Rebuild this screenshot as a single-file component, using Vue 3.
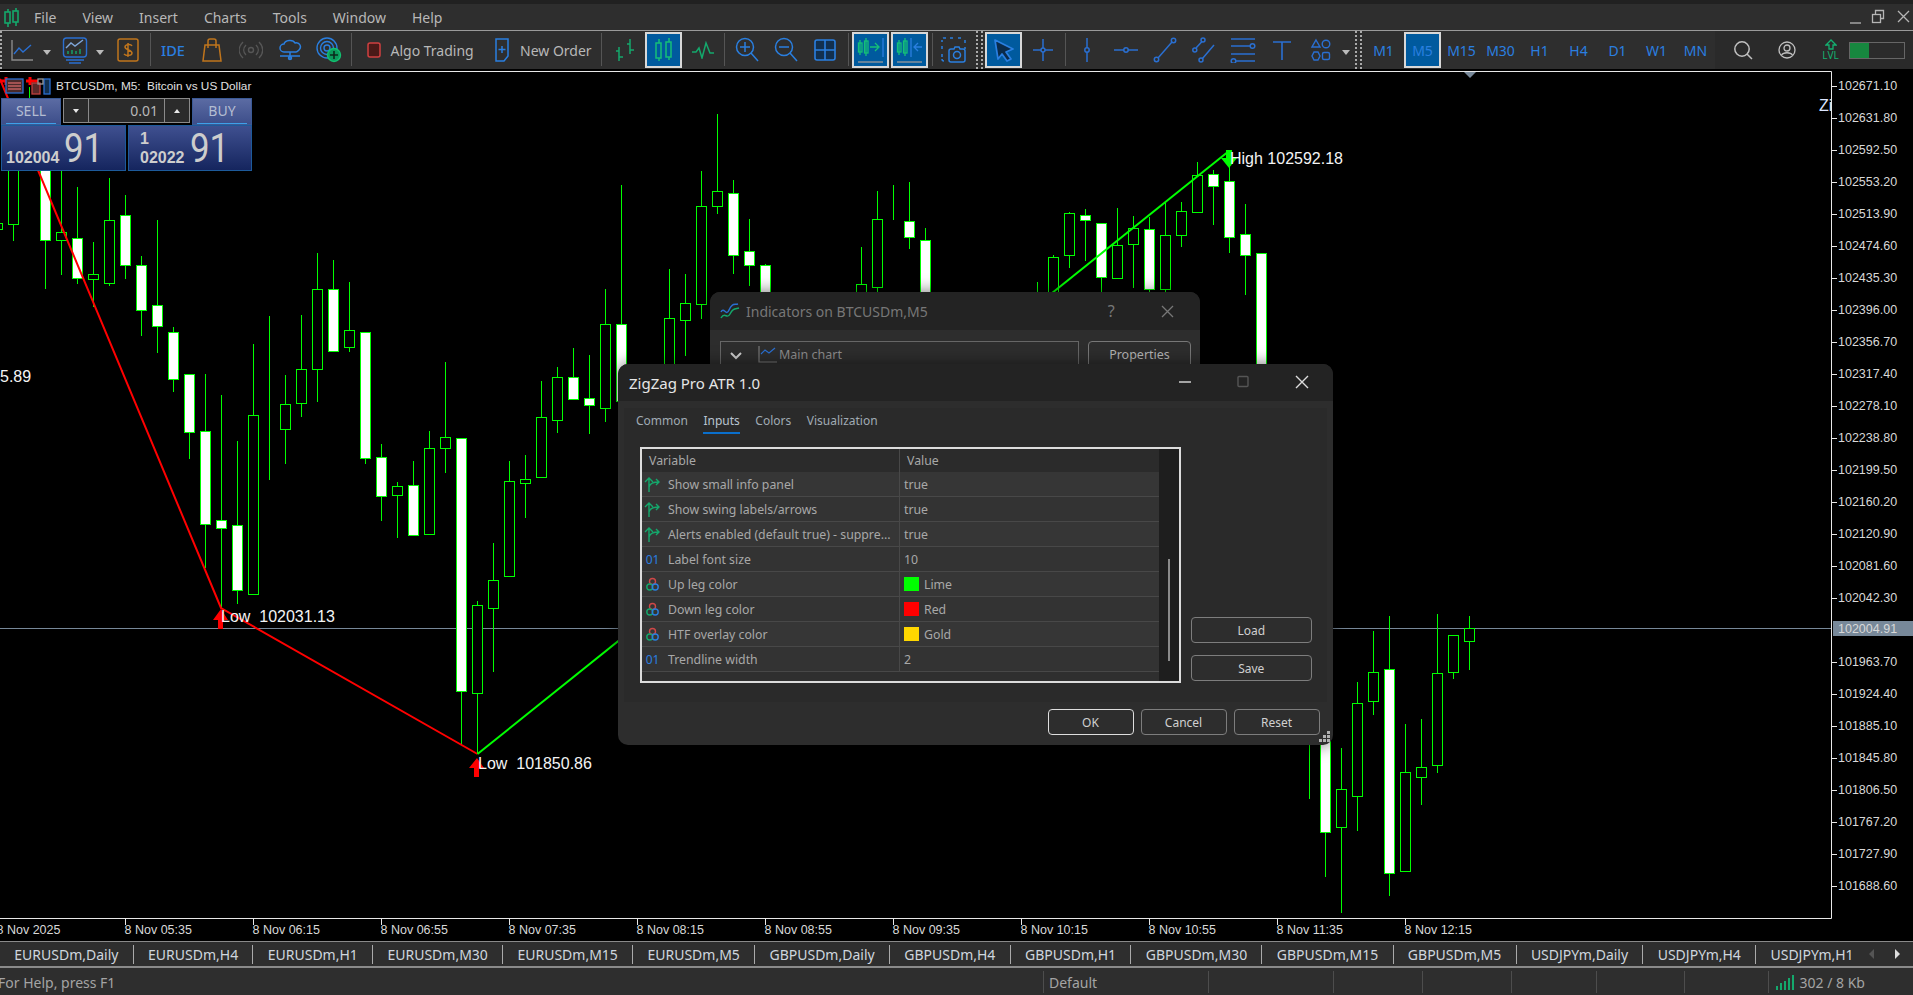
<template>
  <div class="terminal">
    <!-- menu -->
    <div class="menubar">
      <svg class="logo" width="18" height="20" viewBox="0 0 18 20" fill="none" stroke="#14a86c" stroke-width="1.6">
        <path d="M5 1v3M5 15v4M13 0v3M13 14v4" />
        <rect x="2" y="4" width="5" height="11" />
        <rect x="10" y="3" width="5" height="11" />
      </svg>
      <span v-for="m in menus" :key="m" class="menu-item">{{ m }}</span>
      <div class="win-btns">
        <svg width="62" height="18" viewBox="0 0 62 18" fill="none" stroke="#b5b5b5" stroke-width="1.3">
          <path d="M2 15h11" />
          <rect x="24.5" y="6.5" width="8" height="8" />
          <path d="M27.5 6V2.5h8v8H33" />
          <path d="M50 3l11 11M61 3L50 14" />
        </svg>
      </div>
    </div>

    <!-- toolbar -->
    <div class="toolbar">
      <span class="grip g-first"></span>
      <button class="tb">
        <svg width="26" height="26" viewBox="0 0 26 26" fill="none" stroke="#2a6fd1" stroke-width="1.4">
          <path d="M3 3v20h21" stroke="#8a8a8a" />
          <path d="M5 17l5-6 4 4 8-7" />
        </svg>
      </button>
      <span class="drop d1"></span>
      <button class="tb">
        <svg width="26" height="28" viewBox="0 0 26 28" fill="none" stroke="#2a6fd1" stroke-width="1.4">
          <rect x="1.5" y="2" width="23" height="19" rx="3" />
          <path d="M4 12l5-5 4 3 8-6" stroke="#7fa6d8" />
          <path d="M6 18v-3M10 18v-4M14 18v-3M18 18v-5" stroke="#14a86c" />
          <path d="M4 24h18M7 27h12" />
        </svg>
      </button>
      <span class="drop d2"></span>
      <button class="tb">
        <svg width="24" height="26" viewBox="0 0 24 26" fill="none" stroke="#c0751c" stroke-width="1.5">
          <rect x="2" y="2" width="20" height="22" rx="2" />
          <path d="M16 9c-1-2-7-2-7 1s7 3 7 6-6 3-8 1M12 6v14" />
        </svg>
      </button>
      <span class="sep wide"></span>
      <button class="tb ide">IDE</button>
      <button class="tb">
        <svg width="22" height="26" viewBox="0 0 22 26" fill="none" stroke="#c0751c" stroke-width="1.5">
          <path d="M4 8h14l2 16H2z" />
          <path d="M7 11V4a2 2 0 0 1 2-2h4a2 2 0 0 1 2 2v7" />
        </svg>
      </button>
      <button class="tb">
        <svg width="24" height="18" viewBox="0 0 24 18" fill="none" stroke="#565656" stroke-width="1.4">
          <circle cx="12" cy="9" r="2.5" />
          <path d="M7 4c-3 3-3 7 0 10M17 4c3 3 3 7 0 10M4 1C-1 6-1 12 4 17M20 1c5 5 5 11 0 16" />
        </svg>
      </button>
      <button class="tb">
        <svg width="24" height="24" viewBox="0 0 24 24" fill="none" stroke="#2a7fe0" stroke-width="1.5">
          <path d="M6 14a4 4 0 0 1 0-8c1-4 9-5 11-1 5-1 7 4 4 7-1 1-2 2-3 2z" />
          <path d="M2 18h20M12 14v7" />
          <circle cx="12" cy="20" r="1.5" />
        </svg>
      </button>
      <button class="tb">
        <svg width="26" height="26" viewBox="0 0 26 26" fill="none" stroke="#2a7fe0" stroke-width="1.4">
          <circle cx="11" cy="11" r="10" />
          <circle cx="11" cy="11" r="6.5" />
          <circle cx="11" cy="11" r="3" />
          <circle cx="18" cy="18" r="6.5" fill="#0c9a5c" stroke="#12c070" />
          <path d="M18 14v8M14 18h8" stroke="#0b2b1c" stroke-width="1.6" />
        </svg>
      </button>
      <span class="sep wide"></span>
      <button class="tb-text algo">
        <svg width="14" height="16" viewBox="0 0 14 16"><rect x="1" y="1" width="12" height="14" rx="2" fill="#4a1a18" stroke="#d04040" stroke-width="1.5" /></svg>
        Algo Trading
      </button>
      <button class="tb-text order">
        <svg width="16" height="24" viewBox="0 0 16 24" fill="none" stroke="#2a7fe0" stroke-width="1.5">
          <path d="M2 1h12v17l-4 5H2z" />
          <path d="M8 8v7M4.5 11.5h7" />
        </svg>
        New Order
      </button>
      <span class="sep wide"></span>
      <button class="tb">
        <svg width="24" height="24" viewBox="0 0 24 24" fill="none" stroke="#14a86c" stroke-width="1.5">
          <path d="M6 9v14M6 13H3M6 19h4M17 1v15M17 6h-3M17 12h4" />
        </svg>
      </button>
      <button class="tb on">
        <svg width="20" height="26" viewBox="0 0 20 26" fill="none" stroke="#14c078" stroke-width="1.5">
          <path d="M5 2v4M5 21v3M15 1v4M15 20v3" />
          <rect x="2" y="6" width="5" height="15" />
          <rect x="12" y="5" width="5" height="15" />
        </svg>
      </button>
      <button class="tb">
        <svg width="24" height="18" viewBox="0 0 24 18" fill="none" stroke="#14a86c" stroke-width="1.5">
          <path d="M1 11h4l3-4 3 10 4-15 4 10h4" />
        </svg>
      </button>
      <span class="sep thin"></span>
      <button class="tb">
        <svg width="24" height="26" viewBox="0 0 24 26" fill="none" stroke="#2a7fe0" stroke-width="1.5">
          <circle cx="10" cy="10" r="8.5" />
          <path d="M10 5v10M5 10h10M16 16l7 8" />
        </svg>
      </button>
      <button class="tb">
        <svg width="24" height="26" viewBox="0 0 24 26" fill="none" stroke="#2a7fe0" stroke-width="1.5">
          <circle cx="10" cy="10" r="8.5" />
          <path d="M5 10h10M16 16l7 8" />
        </svg>
      </button>
      <button class="tb">
        <svg width="22" height="22" viewBox="0 0 22 22" fill="#12304f" stroke="#2a7fe0" stroke-width="1.6">
          <rect x="1" y="1" width="20" height="20" rx="2" />
          <path d="M11 1v20M1 11h20" />
        </svg>
      </button>
      <span class="sep s9"></span>
      <button class="tb on">
        <svg width="28" height="28" viewBox="0 0 28 28" fill="none" stroke="#14c078" stroke-width="1.3">
          <path d="M3 4v15M9 2v18" />
          <rect x="1.5" y="7" width="3.5" height="9" />
          <rect x="7.5" y="5" width="3.5" height="12" />
          <path d="M13 11h8M18 7l4 4-4 4" />
          <path d="M26 2v19" stroke="#2a7fe0" />
          <path d="M1 26h25" stroke="#9a9a9a" />
        </svg>
      </button>
      <button class="tb on">
        <svg width="28" height="28" viewBox="0 0 28 28" fill="none" stroke="#14c078" stroke-width="1.3">
          <path d="M3 4v15M9 2v18" />
          <rect x="1.5" y="7" width="3.5" height="9" />
          <rect x="7.5" y="5" width="3.5" height="12" />
          <path d="M15 2v19" stroke="#2a7fe0" />
          <path d="M26 11h-8M22 7l-4 4 4 4" stroke="#2a7fe0" />
          <path d="M1 26h25" stroke="#9a9a9a" />
        </svg>
      </button>
      <span class="sep s5"></span>
      <button class="tb">
        <svg width="26" height="26" viewBox="0 0 26 26" fill="none" stroke="#2a7fe0" stroke-width="1.5">
          <path d="M5 1H2.5A1.5 1.5 0 0 0 1 2.5V5M1 9v4M1 17v3M9 1h4M17 1h4M24 3v4M24 10v2M1 22c0 1 1 2 2 2h2" stroke-dasharray="3 2" />
          <path d="M10 12h3l1-2h4l1 2h3a2 2 0 0 1 2 2v9a2 2 0 0 1-2 2H10a2 2 0 0 1-2-2v-9a2 2 0 0 1 2-2z" />
          <circle cx="16" cy="18" r="3.5" />
        </svg>
      </button>
      <span class="grip g-mid"></span>
      <button class="tb on">
        <svg width="24" height="24" viewBox="0 0 24 24" fill="#0b2b4a" stroke="#2a7fe0" stroke-width="1.7" stroke-linejoin="round">
          <path d="M3 2l18 9-7 3 5 7-4 2-5-7-4 5z" />
        </svg>
      </button>
      <button class="tb">
        <svg width="22" height="24" viewBox="0 0 22 24" fill="none" stroke="#2a6fd1" stroke-width="1.5">
          <circle cx="11" cy="12" r="2" />
          <path d="M11 1v9M11 14v9M1 12h8M13 12h8" />
        </svg>
      </button>
      <span class="sep s5"></span>
      <button class="tb">
        <svg width="10" height="26" viewBox="0 0 10 26" fill="none" stroke="#2a6fd1" stroke-width="1.5">
          <circle cx="5" cy="13" r="2.2" />
          <path d="M5 1v10M5 15v10" />
        </svg>
      </button>
      <button class="tb">
        <svg width="24" height="10" viewBox="0 0 24 10" fill="none" stroke="#2a6fd1" stroke-width="1.5">
          <circle cx="12" cy="5" r="2.2" />
          <path d="M0 5h10M14 5h10" />
        </svg>
      </button>
      <button class="tb">
        <svg width="24" height="26" viewBox="0 0 24 26" fill="none" stroke="#2a6fd1" stroke-width="1.5">
          <circle cx="3.5" cy="22.5" r="2.2" />
          <circle cx="20.5" cy="3.5" r="2.2" />
          <path d="M5 21L19 5" />
        </svg>
      </button>
      <button class="tb">
        <svg width="24" height="26" viewBox="0 0 24 26" fill="none" stroke="#2a6fd1" stroke-width="1.5">
          <circle cx="2.8" cy="13" r="2" />
          <circle cx="11" cy="3" r="2" />
          <circle cx="9" cy="23" r="2" />
          <path d="M4 11l6-6.5M10.5 21.5L22 8" />
        </svg>
      </button>
      <button class="tb">
        <svg width="26" height="26" viewBox="0 0 26 26" fill="none" stroke="#2a6fd1" stroke-width="1.5">
          <path d="M1 2h24M1 9h19M1 17h24M6 24h19" />
          <circle cx="22.5" cy="9" r="2.3" />
          <circle cx="3.5" cy="24" r="2.3" />
        </svg>
      </button>
      <button class="tb">
        <svg width="20" height="20" viewBox="0 0 20 20" fill="none" stroke="#2a6fd1" stroke-width="1.6">
          <path d="M1 2h18M10 2v18" />
        </svg>
      </button>
      <button class="tb">
        <svg width="20" height="24" viewBox="0 0 20 24" fill="none" stroke="#2a6fd1" stroke-width="1.4">
          <path d="M5 2l4 7H1z" />
          <circle cx="15" cy="6" r="3.8" />
          <path d="M3 14h4l2 4-2 4H3l-2-4z" />
          <rect x="11.5" y="14.5" width="7" height="7" rx="1.5" />
        </svg>
      </button>
      <span class="drop d3"></span>
      <span class="grip g-tf"></span>
      <button v-for="t in timeframes" :key="t" class="tb tf" :class="{ on: t === 'M5' }">{{ t }}</button>
      <div class="tb-right">
        <svg class="r-search" width="20" height="20" viewBox="0 0 20 20" fill="none" stroke="#c0c0c0" stroke-width="1.5">
          <circle cx="9" cy="9" r="7.2" />
          <path d="M14 14l5 5" />
        </svg>
        <svg class="r-user" width="18" height="18" viewBox="0 0 18 18" fill="none" stroke="#c0c0c0" stroke-width="1.3">
          <circle cx="9" cy="9" r="8" />
          <circle cx="9" cy="7" r="3" />
          <path d="M3.5 14c2-3 9-3 11 0" />
        </svg>
        <div class="lvl">
          <svg width="12" height="11" viewBox="0 0 12 11" fill="none" stroke="#14b070" stroke-width="1.3"><path d="M6 1L1 6h3v4h4V6h3z" /></svg>
          <span>LVL</span>
        </div>
        <div class="meter"><span class="meter-fill"></span></div>
      </div>
    </div>

    <!-- chart -->
    <div class="chart-wrap">
      <svg class="chart" width="1913" height="871" viewBox="0 70 1913 871">
        <defs>
          <clipPath id="plot"><rect x="0" y="70" width="1831" height="847" /></clipPath>
        </defs>
        <g clip-path="url(#plot)">
          <path d="M0 627.5H1831" stroke="#778899" stroke-width="1" />
          <g v-for="c in candles" :key="c.i" stroke="#00ff00" shape-rendering="crispEdges">
            <path :d="wickPath(c)" stroke-width="1" fill="none" />
            <rect :x="c.x - 5" :y="c.top + 0.5" width="10" :height="c.bottom - c.top" :fill="c.filled ? '#fff' : '#000'" stroke-width="1" />
          </g>
          <path d="M0 78L7 95L221 607L477.5 753" stroke="#ff0000" stroke-width="2" fill="none" />
          <path d="M0 80h14M26 80h12M30 76v8M6 76v8" stroke="#ff0000" stroke-width="3" fill="none" />
          <path d="M477.5 753L1229 150" stroke="#00ff00" stroke-width="2" fill="none" />
          <!-- swing arrows -->
          <path d="M221 608l-8 11h5v9h5v-9h5z" fill="#ff0000" />
          <path d="M477 757l-8 10h5v9h5v-9h5z" fill="#ff0000" />
          <path d="M1229 167l-8-10h5v-8h6v8h5z" fill="#00ff00" />
          <text class="lbl" x="221" y="621">Low&nbsp; 102031.13</text>
          <text class="lbl" x="478" y="768">Low&nbsp; 101850.86</text>
          <text class="lbl" x="1230" y="163">High 102592.18</text>
          <text class="lbl" x="0" y="381">5.89</text>
          <text class="lbl zi" x="1819" y="110">ZigZag Pro</text>
          <path d="M1463 70h14l-7 7z" fill="#778899" />
        </g>
        <path d="M0 70.5H1831.5V917.5H0" stroke="#e8e8e8" fill="none" />
        <!-- price axis -->
        <g v-for="p in prices" :key="p.label">
          <path :d="`M1832 ${p.y}h5`" stroke="#e8e8e8" />
          <text class="axis" x="1838" :y="p.y + 3.5">{{ p.label }}</text>
        </g>
        <rect x="1833" y="620" width="80" height="15" fill="#778899" />
        <text class="axis" x="1838" y="632" fill="#fff">102004.91</text>
        <!-- time axis -->
        <g v-for="t in times" :key="t.label">
          <path :d="`M${t.x} 918v6`" stroke="#e8e8e8" />
          <text class="axis" :x="t.x - 1" y="932.5">{{ t.label }}</text>
        </g>
      </svg>

      <div class="symbol">
        <svg width="50" height="18" viewBox="0 0 50 18" fill="none" stroke-width="1.3">
          <rect x="4" y="2" width="17" height="14" fill="#4a2a2a" stroke="#2a6fd1" />
          <path d="M6 6h13M6 9h13M6 12h13" stroke="#c06060" />
          <rect x="30" y="6" width="8" height="11" fill="#5a2a2a" stroke="#c04040" />
          <rect x="42" y="2" width="6" height="15" fill="#12304f" stroke="#2a6fd1" />
          <rect x="36" y="2" width="5" height="5" stroke="#999" />
        </svg>
        <span>BTCUSDm, M5:&nbsp; Bitcoin vs US Dollar</span>
      </div>

      <div class="trade">
        <div class="trade-top">
          <div class="side-btn">SELL</div>
          <div class="volume">
            <span class="vol-step"><i class="tri down"></i></span>
            <span class="vol-val">0.01</span>
            <span class="vol-step"><i class="tri up"></i></span>
          </div>
          <div class="side-btn">BUY</div>
        </div>
        <div class="trade-prices">
          <div class="quote">
            <span class="q-small"><span>102004</span></span>
            <span class="q-big">91</span>
          </div>
          <div class="quote ask">
            <span class="q-small"><span>1</span><span>02022</span></span>
            <span class="q-big">91</span>
          </div>
        </div>
      </div>
    </div>

    <!-- symbol tabs -->
    <div class="tabs">
      <span v-for="t in chartTabs" :key="t" class="chart-tab">{{ t }}</span>
      <div class="tab-arrows">
        <svg width="34" height="12" viewBox="0 0 34 12">
          <path d="M6 1v10L1 6z" fill="#555" />
          <path d="M27 1v10l5-5z" fill="#ddd" />
        </svg>
      </div>
    </div>

    <!-- status -->
    <div class="status">
      <span class="st st-help">For Help, press F1</span>
      <span class="st st-default">Default</span>
      <span class="st st-a"></span>
      <span class="st st-b"></span>
      <span class="st st-c"></span>
      <span class="st st-d"></span>
      <span class="st st-e"></span>
      <span class="st st-f"></span>
      <span class="st st-last">
        <svg width="18" height="15" viewBox="0 0 18 15" fill="#14a86c">
          <rect x="0" y="11" width="2" height="4" />
          <rect x="4" y="8" width="2" height="7" />
          <rect x="8" y="6" width="2" height="9" />
          <rect x="12" y="3" width="2" height="12" />
          <rect x="16" y="0" width="2" height="15" />
        </svg>
        302 / 8 Kb
      </span>
    </div>

    <!-- indicators window, behind -->
    <div class="dlg dlg-back">
      <div class="dlg-title back-title">
        <svg width="20" height="16" viewBox="0 0 20 16" fill="none" stroke-width="1.5">
          <path d="M1 9c3-6 5 5 8-2s5-5 9-6" stroke="#2a6fd1" />
          <path d="M1 15c4-7 6 2 9-4s5-5 9-6" stroke="#14a86c" />
        </svg>
        <span class="back-name">Indicators on BTCUSDm,M5</span>
        <span class="back-q">?</span>
        <svg width="13" height="13" viewBox="0 0 13 13" stroke="#777" stroke-width="1.3"><path d="M1 1l11 11M12 1L1 12" /></svg>
      </div>
      <div class="back-body">
        <div class="tree">
          <svg width="12" height="8" viewBox="0 0 12 8" fill="none" stroke="#ccc" stroke-width="2"><path d="M1 1l5 5 5-5" /></svg>
          <svg class="tree-icon" width="19" height="18" viewBox="0 0 19 18" fill="none" stroke-width="1.2">
            <path d="M1 1v16h18" stroke="#777" />
            <path d="M3 9l4-4 4 3 6-5" stroke="#2a6fd1" />
          </svg>
          <span>Main chart</span>
        </div>
        <div class="props">Properties</div>
      </div>
    </div>

    <!-- indicator properties -->
    <div class="dlg dlg-front">
      <div class="dlg-title">
        <span class="front-name">ZigZag Pro ATR 1.0</span>
        <svg class="title-btns" width="130" height="14" viewBox="0 0 130 14" fill="none" stroke-width="1.4">
          <path d="M0 7h12" stroke="#ddd" />
          <rect x="59" y="1.5" width="10" height="10" rx="1" stroke="#555" />
          <path d="M117 1l12 12M129 1l-12 12" stroke="#ddd" />
        </svg>
      </div>
      <div class="panel">
        <div class="dlg-tabs">
          <span v-for="t in dialogTabs" :key="t" class="dlg-tab" :class="{ active: t === 'Inputs' }">{{ t }}</span>
        </div>
        <div class="panel-main">
          <div class="inputs">
            <div class="inputs-rows">
              <div class="row head">
                <span class="cell">Variable</span>
                <span class="cell val">Value</span>
              </div>
              <div v-for="r in rows" :key="r.name" class="row">
                <span class="cell">
                  <svg v-if="r.type === 'bool'" class="ic" width="17" height="15" viewBox="0 0 17 15" fill="none" stroke="#14a86c" stroke-width="1.4">
                    <path d="M5 15V2M1 5l4-4 4 4M5 10c1-4 4-5 10-5M12 2l3 3-3 3" />
                  </svg>
                  <span v-else-if="r.type === 'int'" class="ic ic-int">01</span>
                  <svg v-else class="ic" width="17" height="15" viewBox="0 0 17 15" fill="none" stroke-width="1.4">
                    <circle cx="8.5" cy="4.5" r="3" stroke="#d04848" />
                    <circle cx="5.8" cy="10" r="3" stroke="#14a86c" />
                    <circle cx="11.2" cy="10" r="3" stroke="#2a7fe0" />
                  </svg>
                  <span>{{ r.name }}</span>
                </span>
                <span class="cell val">
                  <i v-if="r.color" class="swatch" :style="{ background: r.color }"></i>
                  {{ r.value }}
                </span>
              </div>
              <div class="row-rest"></div>
            </div>
            <div class="scroll"><span class="thumb"></span></div>
          </div>
          <div class="side">
            <button class="btn">Load</button>
            <button class="btn">Save</button>
          </div>
        </div>
      </div>
      <div class="footer">
        <button class="btn foot primary">OK</button>
        <button class="btn foot">Cancel</button>
        <button class="btn foot">Reset</button>
      </div>
      <svg class="resize" width="12" height="12" viewBox="0 0 12 12" fill="#b0b0b0">
        <rect x="8" y="0" width="3" height="3" />
        <rect x="4" y="4" width="3" height="3" />
        <rect x="8" y="4" width="3" height="3" />
        <rect x="0" y="8" width="3" height="3" />
        <rect x="4" y="8" width="3" height="3" />
        <rect x="8" y="8" width="3" height="3" />
      </svg>
    </div>
  </div>
</template>

<script setup>
const menus = ['File', 'View', 'Insert', 'Charts', 'Tools', 'Window', 'Help']
const timeframes = ['M1', 'M5', 'M15', 'M30', 'H1', 'H4', 'D1', 'W1', 'MN']
const dialogTabs = ['Common', 'Inputs', 'Colors', 'Visualization']
const chartTabs = [
  'EURUSDm,Daily', 'EURUSDm,H4', 'EURUSDm,H1', 'EURUSDm,M30', 'EURUSDm,M15', 'EURUSDm,M5',
  'GBPUSDm,Daily', 'GBPUSDm,H4', 'GBPUSDm,H1', 'GBPUSDm,M30', 'GBPUSDm,M15', 'GBPUSDm,M5',
  'USDJPYm,Daily', 'USDJPYm,H4', 'USDJPYm,H1',
]

const rows = [
  { type: 'bool', name: 'Show small info panel', value: 'true' },
  { type: 'bool', name: 'Show swing labels/arrows', value: 'true' },
  { type: 'bool', name: 'Alerts enabled (default true) - suppre...', value: 'true' },
  { type: 'int', name: 'Label font size', value: '10' },
  { type: 'color', name: 'Up leg color', value: 'Lime', color: '#00ff00' },
  { type: 'color', name: 'Down leg color', value: 'Red', color: '#ff0000' },
  { type: 'color', name: 'HTF overlay color', value: 'Gold', color: '#ffd700' },
  { type: 'int', name: 'Trendline width', value: '2' },
]

// index, high, body top, body bottom, low, filled
const raw = [
  [-1, 215, 222, 228, 235, 0], [0, 150, 150, 223, 240, 0], [1, 86, 100, 120, 130, 0], [2, 150, 150, 239, 288, 1],
  [3, 150, 231, 239, 274, 0], [4, 186, 237, 277, 283, 1], [5, 241, 273, 278, 306, 0], [6, 177, 219, 282, 285, 0],
  [7, 194, 214, 264, 278, 1], [8, 255, 264, 309, 335, 1], [9, 219, 304, 325, 352, 1], [10, 326, 331, 378, 391, 1],
  [11, 373, 373, 431, 458, 1], [12, 373, 430, 523, 567, 1], [13, 394, 519, 527, 607, 1], [14, 440, 524, 589, 603, 1],
  [15, 343, 414, 593, 593, 0], [16, 315, 421, 421, 479, 0], [17, 374, 403, 428, 463, 0], [18, 314, 368, 402, 416, 0],
  [19, 252, 288, 368, 401, 0], [20, 259, 288, 350, 350, 1], [21, 281, 329, 346, 351, 0], [22, 331, 331, 457, 463, 1],
  [23, 443, 456, 495, 520, 1], [24, 481, 485, 494, 537, 0], [25, 460, 484, 534, 534, 1], [26, 430, 447, 533, 533, 0],
  [27, 361, 436, 447, 472, 0], [28, 437, 437, 690, 743, 1], [29, 600, 604, 692, 753, 0], [30, 542, 579, 607, 671, 0],
  [31, 460, 480, 575, 575, 0], [32, 454, 478, 482, 517, 0], [33, 380, 416, 476, 476, 0], [34, 366, 376, 419, 432, 0],
  [35, 347, 376, 398, 398, 1], [36, 354, 397, 404, 433, 1], [37, 288, 323, 407, 421, 0], [38, 184, 323, 400, 420, 1],
  [41, 268, 317, 400, 420, 0], [42, 273, 302, 319, 355, 0], [43, 170, 205, 303, 318, 0], [44, 113, 190, 205, 213, 0],
  [45, 179, 192, 254, 273, 1], [46, 218, 250, 264, 285, 1], [47, 263, 264, 293, 300, 1], [52, 292, 300, 320, 340, 0],
  [53, 246, 283, 320, 340, 0], [54, 190, 218, 286, 293, 0], [55, 184, 219, 219, 219, 0], [56, 181, 220, 236, 248, 1],
  [57, 227, 239, 320, 340, 1], [64, 281, 300, 320, 330, 0], [65, 254, 256, 320, 330, 0], [66, 211, 212, 254, 267, 0],
  [67, 208, 214, 219, 260, 1], [68, 222, 222, 276, 300, 1], [69, 207, 244, 277, 277, 0], [70, 215, 227, 243, 287, 0],
  [71, 216, 228, 288, 300, 1], [72, 202, 234, 288, 300, 0], [73, 201, 210, 234, 246, 0], [74, 161, 174, 211, 211, 0],
  [75, 169, 173, 185, 224, 1], [76, 150, 180, 236, 252, 1], [77, 203, 233, 254, 294, 1], [78, 252, 252, 400, 420, 1],
  [81, 700, 710, 730, 798, 0], [82, 700, 720, 831, 876, 1], [83, 747, 788, 826, 912, 0], [84, 681, 702, 795, 830, 0],
  [85, 630, 671, 700, 714, 0], [86, 615, 668, 872, 895, 1], [87, 723, 771, 870, 870, 0], [88, 718, 766, 776, 804, 0],
  [89, 613, 672, 764, 772, 0], [90, 634, 634, 671, 678, 0], [91, 615, 627, 640, 669, 0],
]
const candles = raw.map(([i, high, top, bottom, low, filled]) => ({
  i, x: 13.5 + 16 * i, high, top, bottom, low, filled: !!filled,
}))

function wickPath(c) {
  return `M${c.x} ${c.high}V${c.low}`
}

const priceLabels = [
  '102671.10', '102631.80', '102592.50', '102553.20', '102513.90', '102474.60', '102435.30', '102396.00',
  '102356.70', '102317.40', '102278.10', '102238.80', '102199.50', '102160.20', '102120.90', '102081.60',
  '102042.30', null, '101963.70', '101924.40', '101885.10', '101845.80', '101806.50', '101767.20',
  '101727.90', '101688.60',
]
const prices = priceLabels
  .map((label, i) => ({ label, y: 85.5 + 32 * i }))
  .filter(p => p.label)

const timeLabels = [
  '8 Nov 2025', '8 Nov 05:35', '8 Nov 06:15', '8 Nov 06:55', '8 Nov 07:35', '8 Nov 08:15', '8 Nov 08:55',
  '8 Nov 09:35', '8 Nov 10:15', '8 Nov 10:55', '8 Nov 11:35', '8 Nov 12:15',
]
const times = timeLabels.map((label, i) => ({ label, x: -2.5 + 128 * i }))
</script>

<style>
body {
  background: #000;
  overflow: hidden;
}
</style>

<style scoped>
.terminal {
  position: relative;
  width: 1913px;
  height: 995px;
  overflow: hidden;
  display: flex;
  flex-direction: column;
  background: #000;
  font-family: "Noto Sans", "Liberation Sans", sans-serif;
  color: #b8b8b8;
}

button {
  font-family: inherit;
  padding: 0;
  background: none;
  border: none;
  color: inherit;
}

/* menu */
.menubar {
  height: 26px;
  margin-top: 4px;
  padding-left: 34px;
  display: flex;
  align-items: center;
  gap: 26px;
  position: relative;
  background: #2e2e2e;
  border-bottom: 1px solid #9a9a9a;
  font-size: 14px;
  box-shadow: 0 -4px 0 #212121;
}

.logo {
  position: absolute;
  left: 3px;
  top: 4px;
}

.win-btns {
  position: absolute;
  right: 3px;
  top: 4px;
  display: flex;
}

/* toolbar */
.toolbar {
  height: 38px;
  display: flex;
  align-items: stretch;
  background: #2e2e2e;
  flex-shrink: 0;
}

.tb {
  width: 39px;
  display: flex;
  align-items: center;
  justify-content: center;
  flex-shrink: 0;
}

.tb.on {
  background: #005a9e;
  outline: 1px solid #d8d8d8;
  outline-offset: -2px;
  box-shadow: inset 0 0 0 1px #d8d8d8;
  margin: 1px 1px 1px 1px;
  width: 37px;
}

.ide {
  color: #2a7fe0;
  font-size: 14.5px;
  font-weight: 500;
}

.tf {
  color: #2a7fe0;
  font-size: 14px;
}

.tb-text {
  display: flex;
  align-items: center;
  font-size: 14px;
  color: #b8b8b8;
  gap: 10px;
  flex-shrink: 0;
}

.algo {
  width: 129.5px;
  padding-left: 12px;
}

.order {
  width: 115px;
  padding-left: 10px;
}

.sep {
  flex-shrink: 0;
  position: relative;
}

.sep::after {
  content: "";
  position: absolute;
  top: 2px;
  bottom: 3px;
  right: 0;
  width: 1px;
  background: #555;
}

.sep.wide {
  width: 6px;
}

.sep.wide::after {
  right: 3px;
}

.sep.thin {
  width: 5px;
}

.sep.thin::after {
  right: 2px;
}

.sep.s9 {
  width: 7px;
}

.sep.s9::after {
  right: 2px;
}

.sep.s5 {
  width: 5.5px;
}

.sep.s5::after {
  right: 2px;
}

.drop {
  flex-shrink: 0;
  position: relative;
}

.drop::after {
  content: "";
  position: absolute;
  top: 19px;
  left: 1px;
  border-left: 4px solid transparent;
  border-right: 4px solid transparent;
  border-top: 5px solid #bbb;
}

.d1,
.d2,
.d3 {
  width: 10px;
}

.d1 + .tb,
.d2 + .tb {
  margin-left: 4px;
}

.grip {
  flex-shrink: 0;
  position: relative;
  border-left: 2px dotted #aaa;
}

.g-first {
  width: 0;
  margin-right: 0.5px;
}

.g-mid {
  width: 8.5px;
  margin-left: 2px;
  margin-right: -2px;
}

.g-mid::after,
.g-tf::after {
  content: "";
  position: absolute;
  left: 3px;
  top: 0;
  bottom: 0;
  border-left: 2px dotted #aaa;
}

.g-tf {
  width: 11.5px;
  margin-left: 4px;
  margin-right: -4px;
}

.tb-right {
  width: 198px;
  display: flex;
  align-items: center;
  background: #2a2a2a;
  position: relative;
  flex-shrink: 0;
}

.r-search {
  margin-left: 18px;
}

.r-user {
  margin-left: 25px;
}

.lvl {
  margin-left: 26px;
  width: 17px;
  display: flex;
  flex-direction: column;
  align-items: center;
  color: #14b070;
  font-size: 10px;
  line-height: 11px;
}

.meter {
  margin-left: 9.5px;
  width: 56px;
  height: 17px;
  background: #2b2b2b;
  border: 1px solid #666;
  box-sizing: border-box;
}

.meter-fill {
  display: block;
  width: 19px;
  height: 100%;
  background: #17873f;
}

/* chart */
.chart-wrap {
  position: relative;
  margin-top: 2px;
  height: 871px;
  flex-shrink: 0;
  background: #000;
}

.chart {
  display: block;
}

.lbl {
  font-family: "Liberation Sans", sans-serif;
  font-size: 16px;
  fill: #f4f4f4;
}

.zi {
  fill: #dde6ff;
}

.axis {
  font-family: "Liberation Sans", sans-serif;
  font-size: 12.5px;
  fill: #d8d8d8;
}

.symbol {
  position: absolute;
  top: 6px;
  left: 2px;
  display: flex;
  align-items: center;
  gap: 4px;
  font-family: "Liberation Sans", sans-serif;
  font-size: 11.8px;
  color: #e0e0e0;
  height: 18px;
}

.trade {
  position: absolute;
  top: 27px;
  left: 1px;
  width: 251px;
}

.trade-top {
  display: flex;
  gap: 2px;
  height: 27px;
}

.side-btn {
  width: 60px;
  box-sizing: border-box;
  background: linear-gradient(#5b6ba3, #3d4e8a);
  border: 1px solid #3a5a96;
  color: #b4bdd2;
  font-size: 14px;
  text-align: center;
  line-height: 24px;
  position: relative;
}

.side-btn::after {
  content: "";
  position: absolute;
  left: 4px;
  right: 4px;
  bottom: 0;
  height: 1px;
  background: #3fa0e8;
}

.volume {
  width: 127px;
  height: 25px;
  display: flex;
  box-sizing: border-box;
  background: #2b2b2b;
  border: 1px solid #8a8a8a;
  color: #b8b8b8;
  font-size: 14px;
}

.vol-step {
  width: 24px;
  display: flex;
  align-items: center;
  justify-content: center;
}

.vol-val {
  flex: 1;
  text-align: right;
  padding-right: 6px;
  line-height: 23px;
  border-left: 1px solid #8a8a8a;
  border-right: 1px solid #8a8a8a;
}

.tri {
  border-left: 3.5px solid transparent;
  border-right: 3.5px solid transparent;
}

.tri.down {
  border-top: 4px solid #e8e8e8;
}

.tri.up {
  border-bottom: 4px solid #e8e8e8;
}

.trade-prices {
  display: flex;
  gap: 2px;
}

.quote {
  width: 125px;
  height: 46px;
  box-sizing: border-box;
  display: flex;
  align-items: flex-end;
  padding: 0 0 2px 4px;
  background: linear-gradient(#3f5090, #15255e);
  border: 1px solid #1d5a9a;
  color: #cdcdcd;
}

.quote.ask {
  width: 124px;
  padding-left: 11px;
}

.q-small {
  display: flex;
  flex-direction: column;
  font-family: "Liberation Sans", sans-serif;
  font-size: 16px;
  font-weight: 700;
  line-height: 19px;
  margin-right: 5px;
  padding-bottom: 1px;
}

.q-big {
  display: inline-block;
  font-family: Roboto, "Liberation Sans", sans-serif;
  font-weight: 400;
  font-size: 41px;
  line-height: 40px;
  transform: scaleX(0.85);
  transform-origin: left center;
}

/* tabs + status */
.tabs {
  height: 27px;
  margin-top: -1px;
  display: flex;
  align-items: center;
  background: #2e2e2e;
  border-top: 1px solid #8a8a8a;
  border-bottom: 2px solid #8a8a8a;
  box-sizing: border-box;
  flex-shrink: 0;
  position: relative;
  color: #cfd6de;
  font-size: 14px;
}

.chart-tab {
  padding: 0 14.3px;
  height: 19px;
  line-height: 19px;
  border-right: 1px solid #aaa;
  white-space: nowrap;
}

.chart-tab:nth-child(15) {
  border-right: 0;
}

.tab-arrows {
  position: absolute;
  right: 11px;
  top: 6px;
  display: flex;
  background: #2e2e2e;
}

.status {
  flex: 1;
  display: flex;
  background: #2e2e2e;
  font-size: 14px;
  align-items: stretch;
  color: #a4a4a4;
}

.st {
  height: 22px;
  margin-top: 3px;
  line-height: 23px;
  box-sizing: border-box;
  border-right: 1px solid #4d4d4d;
  flex-shrink: 0;
  white-space: nowrap;
}

.st-help {
  width: 1045px;
  margin-left: -1px;
  text-indent: -1px;
}

.st-default {
  width: 165px;
  padding-left: 5px;
}

.st-a {
  width: 125px;
}

.st-b,
.st-c {
  width: 89px;
}

.st-d {
  width: 85px;
}

.st-e {
  width: 87.5px;
}

.st-f {
  width: 84px;
}

.st-last {
  width: 145px;
  border-right: 0;
  display: flex;
  align-items: center;
  gap: 6px;
  padding-left: 7px;
}

/* dialogs */
.dlg {
  position: absolute;
  border-radius: 10px;
  background: #2d2d2d;
  box-shadow: 0 0 16px rgba(0, 0, 0, 0.55);
  box-sizing: border-box;
}

.dlg-back {
  left: 710px;
  top: 292px;
  width: 490px;
  height: 200px;
}

.dlg-front {
  left: 618px;
  top: 364px;
  width: 715px;
  height: 381px;
  display: flex;
  flex-direction: column;
}

.dlg-title {
  height: 37px;
  flex-shrink: 0;
  display: flex;
  align-items: center;
  background: #232323;
  border-radius: 10px 10px 0 0;
  padding-left: 11px;
  position: relative;
}

.back-title {
  height: 38px;
  color: #777;
  font-size: 14px;
  padding-left: 10px;
}

.back-name {
  margin-left: 6px;
}

.back-q {
  margin-left: 180px;
  font-size: 16px;
  margin-right: 46px;
}

.back-body {
  display: flex;
  padding: 11px 9px 0 10px;
  gap: 9px;
}

.tree {
  width: 359px;
  height: 40px;
  box-sizing: border-box;
  border: 1px solid #666;
  display: flex;
  align-items: flex-start;
  padding-left: 9px;
  font-size: 12.5px;
  color: #8c8c8c;
  line-height: 26px;
}

.tree > svg:first-child {
  margin-top: 10px;
}

.tree-icon {
  margin: 3px 2px 0 16px;
}

.props {
  width: 103px;
  height: 40px;
  box-sizing: border-box;
  border: 1px solid #777;
  border-radius: 4px;
  text-align: center;
  font-size: 12.5px;
  line-height: 26px;
  color: #b4b4b4;
}

.front-name {
  color: #e6e6e6;
  font-size: 15px;
}

.title-btns {
  position: absolute;
  left: 561px;
  top: 11px;
}

.panel {
  margin: 7px 6px 0;
  height: 294px;
  box-sizing: border-box;
  padding: 0 10px 0 16px;
  background: #2a2a2a;
}

.dlg-tabs {
  height: 26px;
  display: flex;
  gap: 15.5px;
  font-size: 12px;
  color: #a0aab4;
  margin-left: -4px;
  margin-bottom: 13px;
}

.dlg-tab {
  line-height: 25px;
  height: 26px;
  box-sizing: border-box;
}

.dlg-tab.active {
  color: #b8c4d0;
  border-bottom: 2px solid #0a6fcc;
}

.panel-main {
  display: flex;
  gap: 10px;
  align-items: stretch;
}

.inputs {
  width: 541px;
  height: 236px;
  box-sizing: border-box;
  border: 2px solid #dcdcdc;
  display: flex;
  background: #1e1e1e;
}

.inputs-rows {
  width: 516.5px;
  display: flex;
  flex-direction: column;
}

.row {
  display: grid;
  grid-template-columns: 258px 1fr;
  height: 25px;
  box-sizing: border-box;
  border-bottom: 1px solid #484848;
  background: #363636;
  font-size: 12.3px;
  color: #a8a8a8;
}

.row:nth-child(odd) {
  background: #333;
}

.row.head {
  height: 22.5px;
  background: #2b2b2b;
  border-bottom: 0;
}

.cell {
  display: flex;
  align-items: center;
  min-width: 0;
  white-space: nowrap;
  padding: 1px 0 0 2px;
  border-right: 1px solid #484848;
  box-sizing: border-box;
}

.head .cell {
  padding-left: 7px;
}

.cell.val {
  border-right: 0;
  padding-left: 4px;
}

.head .cell.val {
  padding-left: 7px;
}

.ic {
  width: 17px;
  margin-right: 7px;
  flex-shrink: 0;
}

.ic-int {
  color: #2a7fe0;
  font-size: 12px;
  text-align: center;
}

.swatch {
  width: 15px;
  height: 14px;
  margin-right: 5px;
  flex-shrink: 0;
}

.row-rest {
  flex: 1;
  background: #2f2f2f;
}

.scroll {
  flex: 1;
  position: relative;
}

.thumb {
  position: absolute;
  left: 9px;
  top: 110px;
  width: 2px;
  height: 102px;
  background: #8a8a8a;
}

.side {
  width: 120.5px;
  display: flex;
  flex-direction: column;
  justify-content: flex-end;
  gap: 12px;
  padding-bottom: 2px;
}

.btn {
  height: 26px;
  box-sizing: border-box;
  border: 1px solid #7d7d7d;
  border-radius: 4px;
  background: #2d2d2d;
  color: #d0d0d0;
  font-size: 12px;
}

.footer {
  height: 43px;
  display: flex;
  justify-content: flex-end;
  gap: 7px;
  padding: 7px 13.5px 0 0;
  box-sizing: border-box;
}

.foot {
  width: 86px;
}

.primary {
  border-color: #dedede;
}

.resize {
  position: absolute;
  right: 2px;
  bottom: 2px;
}
</style>
